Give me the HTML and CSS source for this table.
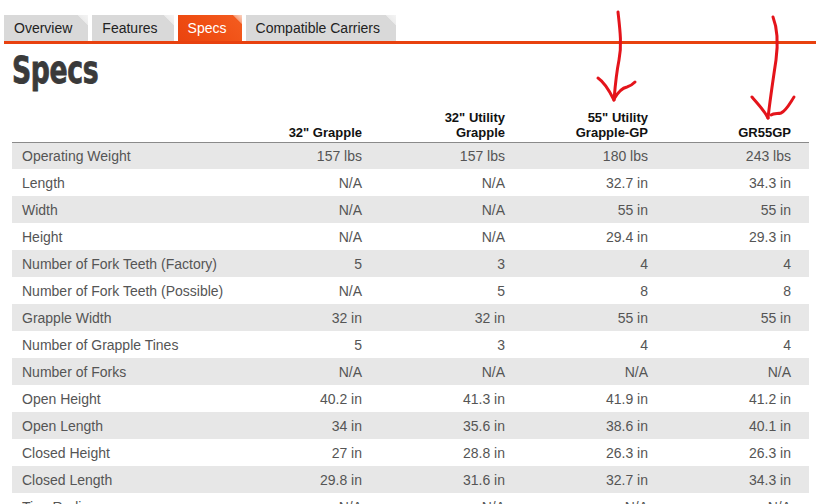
FILE: index.html
```html
<!DOCTYPE html>
<html>
<head>
<meta charset="utf-8">
<link rel="stylesheet" href="styles.css">
</head>
<body>
<div class="page">
  <div class="tabs">
    <div class="tab">Overview</div>
    <div class="tab">Features</div>
    <div class="tab active">Specs</div>
    <div class="tab">Compatible Carriers</div>
  </div>
  <div class="content">
    <h1 class="title"><span class="title-text">Specs</span></h1>
    <table class="specs">
      <colgroup>
        <col class="c-label"><col class="c-val"><col class="c-val"><col class="c-val"><col class="c-val">
      </colgroup>
      <thead>
        <tr>
          <th></th>
          <th>32" Grapple</th>
          <th>32" Utility<br>Grapple</th>
          <th>55" Utility<br>Grapple-GP</th>
          <th>GR55GP</th>
        </tr>
      </thead>
      <tbody>
        <tr><td>Operating Weight</td><td>157 lbs</td><td>157 lbs</td><td>180 lbs</td><td>243 lbs</td></tr>
        <tr><td>Length</td><td>N/A</td><td>N/A</td><td>32.7 in</td><td>34.3 in</td></tr>
        <tr><td>Width</td><td>N/A</td><td>N/A</td><td>55 in</td><td>55 in</td></tr>
        <tr><td>Height</td><td>N/A</td><td>N/A</td><td>29.4 in</td><td>29.3 in</td></tr>
        <tr><td>Number of Fork Teeth (Factory)</td><td>5</td><td>3</td><td>4</td><td>4</td></tr>
        <tr><td>Number of Fork Teeth (Possible)</td><td>N/A</td><td>5</td><td>8</td><td>8</td></tr>
        <tr><td>Grapple Width</td><td>32 in</td><td>32 in</td><td>55 in</td><td>55 in</td></tr>
        <tr><td>Number of Grapple Tines</td><td>5</td><td>3</td><td>4</td><td>4</td></tr>
        <tr><td>Number of Forks</td><td>N/A</td><td>N/A</td><td>N/A</td><td>N/A</td></tr>
        <tr><td>Open Height</td><td>40.2 in</td><td>41.3 in</td><td>41.9 in</td><td>41.2 in</td></tr>
        <tr><td>Open Length</td><td>34 in</td><td>35.6 in</td><td>38.6 in</td><td>40.1 in</td></tr>
        <tr><td>Closed Height</td><td>27 in</td><td>28.8 in</td><td>26.3 in</td><td>26.3 in</td></tr>
        <tr><td>Closed Length</td><td>29.8 in</td><td>31.6 in</td><td>32.7 in</td><td>34.3 in</td></tr>
        <tr><td>Tine Radius</td><td>N/A</td><td>N/A</td><td>N/A</td><td>N/A</td></tr>
      </tbody>
    </table>
  </div>
</div>
<svg class="marks" width="831" height="504" viewBox="0 0 831 504">
  <g fill="none" stroke="#e4141b" stroke-width="3" stroke-linecap="round" stroke-linejoin="round">
    <path d="M618 12 C620 30 622 45 619 60 C616 75 615 88 614 100"/>
    <path d="M598 78 C604 82 609 90 614 100"/>
    <path d="M614 99 C618 92 622 88 627 87 C631 86 633 84 635 82"/>
    <path d="M773 17 C778 30 778 45 776 60 C773 80 770 100 768 118"/>
    <path d="M752 97 C758 104 764 110 768 118"/>
    <path d="M771 115 C774 113 778 114 781 113 C786 111 790 103 794 97"/>
  </g>
</svg>
</body>
</html>
```

FILE: styles.css
```css
html, body {
  margin: 0;
  padding: 0;
  background: #ffffff;
}
body {
  font-family: "Liberation Sans", Arial, sans-serif;
  width: 831px;
  height: 504px;
  overflow: hidden;
  position: relative;
}
.page {
  padding: 15px 0 0 4px;
  width: 812px;
}
.tabs {
  display: flex;
  gap: 4px;
  border-bottom: 3px solid #e8410f;
  height: 26px;
}
.tab {
  height: 26px;
  line-height: 26px;
  font-size: 14px;
  color: #222222;
  padding: 0 16px 0 10px;
  background: linear-gradient(225deg, #f4f4f4 0, #ececec 7px, #d9d9d9 7.5px, #d9d9d9 100%);
}
.tab.active {
  color: #ffffff;
  padding-right: 15px;
  background: linear-gradient(225deg, #fbd3c2 0, #f6a27f 6px, #f35a1e 7px, #ef4d12 60%, #ea4410 100%);
}
.content {
  padding-left: 8px;
}
.title {
  margin: 7px 0 0 0;
  font-family: "DejaVu Sans Condensed", "Liberation Sans Narrow", sans-serif;
  font-weight: bold;
  font-size: 38px;
  line-height: 39px;
  letter-spacing: -0.5px;
  color: #3a3a3a;
  height: 39px;
  -webkit-text-stroke: 0.8px #3a3a3a;
}
.title-text {
  display: inline-block;
  transform: scaleX(0.78);
  transform-origin: left center;
}
.specs {
  width: 797px;
  border-collapse: collapse;
  table-layout: fixed;
  margin-top: 0;
}
.c-label { width: 225px; }
.c-val { width: 143px; }
.specs th {
  height: 52px;
  vertical-align: bottom;
  text-align: right;
  font-size: 13px;
  line-height: 15px;
  font-weight: bold;
  color: #111111;
  padding: 0 18px 2px 0;
  border-bottom: 1px solid #8a8a8a;
  box-sizing: border-box;
}
.specs td {
  height: 27px;
  padding: 0 18px 0 0;
  font-size: 14px;
  color: #555555;
  text-align: right;
  vertical-align: middle;
  white-space: nowrap;
  box-sizing: border-box;
}
.specs td:first-child {
  text-align: left;
  padding: 0 0 0 10px;
}
.specs tbody tr:nth-child(odd) td {
  background: #e7e7e7;
}
.marks {
  position: absolute;
  left: 0;
  top: 0;
  pointer-events: none;
}
```
